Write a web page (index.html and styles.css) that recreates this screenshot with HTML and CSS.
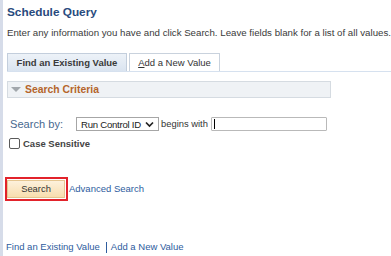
FILE: index.html
```html
<!DOCTYPE html>
<html>
<head>
<meta charset="utf-8">
<link rel="stylesheet" href="styles.css">
</head>
<body>
<div class="page">
  <div class="sidebar"></div>
  <div class="main">
    <div class="title">Schedule Query</div>
    <div class="intro">Enter any information you have and click Search. Leave fields blank for a list of all values.</div>
    <div class="tabs">
      <div class="tab active">Find an Existing Value</div>
      <div class="tab"><u>A</u>dd a New Value</div>
    </div>
    <div class="criteria">
      <span class="tri"></span><span class="crit-text">Search Criteria</span>
    </div>
    <div class="searchrow">
      <span class="label">Search by:</span>
      <span class="select"><span>Run Control ID</span><svg width="9" height="7" viewBox="0 0 9 7"><path d="M1 1.5 L4.5 5 L8 1.5" fill="none" stroke="#222" stroke-width="1.7"/></svg></span>
      <span class="begins">begins with</span>
      <span class="input"><span class="caret"></span></span>
    </div>
    <div class="caserow">
      <span class="cb"></span><span class="case">Case Sensitive</span>
    </div>
    <div class="btnrow">
      <div class="focus"><div class="btn">Search</div></div>
      <a class="link adv">Advanced Search</a>
    </div>
    <div class="footer">
      <a class="link">Find an Existing Value</a><span class="sep"></span><a class="link">Add a New Value</a>
    </div>
  </div>
</div>
</body>
</html>
```
FILE: styles.css
```css
html, body { margin: 0; padding: 0; background: #fff; }
body { font-family: "Liberation Sans", Arial, sans-serif; }
.page { display: flex; width: 391px; height: 256px; overflow: hidden; }
.sidebar { width: 3px; background: #d6dce9; flex: none; }
.main { flex: 1; padding-left: 4px; display: flex; flex-direction: column; align-items: flex-start; white-space: nowrap; }
.title { font-size: 11.8px; font-weight: bold; color: #284a7d; margin-top: 5px; line-height: 14px; }
.intro { font-size: 9.7px; color: #3a3a3a; margin-top: 8px; line-height: 12px; }
.tabs { display: flex; align-items: flex-end; margin-top: 14px; height: 19px; width: 384px; border-bottom: 1px solid #d6e1ef; box-sizing: border-box; }
.tab { box-sizing: border-box; height: 18px; line-height: 17px; font-size: 9.5px; color: #333; border: 1px solid #c9d2dd; border-bottom: none; background: #fff; text-align: center; width: 91px; }
.tab.active { background: linear-gradient(#edf2f8, #dae4f0); font-weight: bold; width: 120px; margin-right: 2px; color: #3a3a3a; border-color: #c3cedc; }
.tab u { text-decoration: underline; }
.criteria { margin-top: 9px; box-sizing: border-box; width: 324px; height: 17px; background: #eff2f5; border: 1px solid #d5dbe1; display: flex; align-items: center; }
.tri { width: 0; height: 0; border-left: 5px solid transparent; border-right: 5px solid transparent; border-top: 5px solid #a2a7ac; margin-left: 3px; margin-right: 4px; }
.crit-text { font-size: 10.4px; font-weight: bold; color: #b5652b; line-height: 12px; }
.searchrow { display: flex; align-items: center; margin-top: 19px; height: 14px; }
.label { font-size: 11.1px; color: #48698f; margin-left: 3px; width: 66px; line-height: 14px; }
.select { box-sizing: border-box; width: 83px; height: 14px; border: 1px solid #a6a6a6; font-size: 9.6px; color: #222; display: flex; align-items: center; justify-content: space-between; padding: 0 4px 0 4px; letter-spacing: -0.25px; }
.begins { font-size: 9.4px; color: #333; margin-left: 2px; width: 50px; line-height: 12px; }
.input { box-sizing: border-box; width: 116px; height: 14px; border: 1px solid #b9b9b9; border-radius: 1px; position: relative; }
.caret { position: absolute; left: 2px; top: 1px; width: 1px; height: 10px; background: #000; }
.caserow { display: flex; align-items: center; margin-top: 7px; height: 11px; }
.cb { box-sizing: border-box; width: 11px; height: 11px; border: 1px solid #5a5a5a; border-radius: 2px; margin-left: 2px; margin-right: 3px; }
.case { font-size: 9.5px; font-weight: bold; color: #444; line-height: 11px; }
.btnrow { display: flex; align-items: center; margin-top: 28px; }
.focus { box-sizing: border-box; width: 63px; height: 24px; border: 2px solid #e2232b; margin-left: -2px; padding: 1px 1px 1px 0; }
.btn { box-sizing: border-box; height: 18px; line-height: 16px; text-align: center; font-size: 9.4px; color: #333; background: linear-gradient(#fdf1dc, #f8deaf); border: 1px solid #e5c690; }
.link { color: #2e5c9e; font-size: 9.5px; text-decoration: none; line-height: 12px; }
.adv { margin-left: 1px; }
.footer { display: flex; align-items: center; margin-top: 40px; margin-left: -1px; }
.sep { width: 1px; height: 11px; background: #2e5c9e; margin: 0 4px 0 6px; }
```
